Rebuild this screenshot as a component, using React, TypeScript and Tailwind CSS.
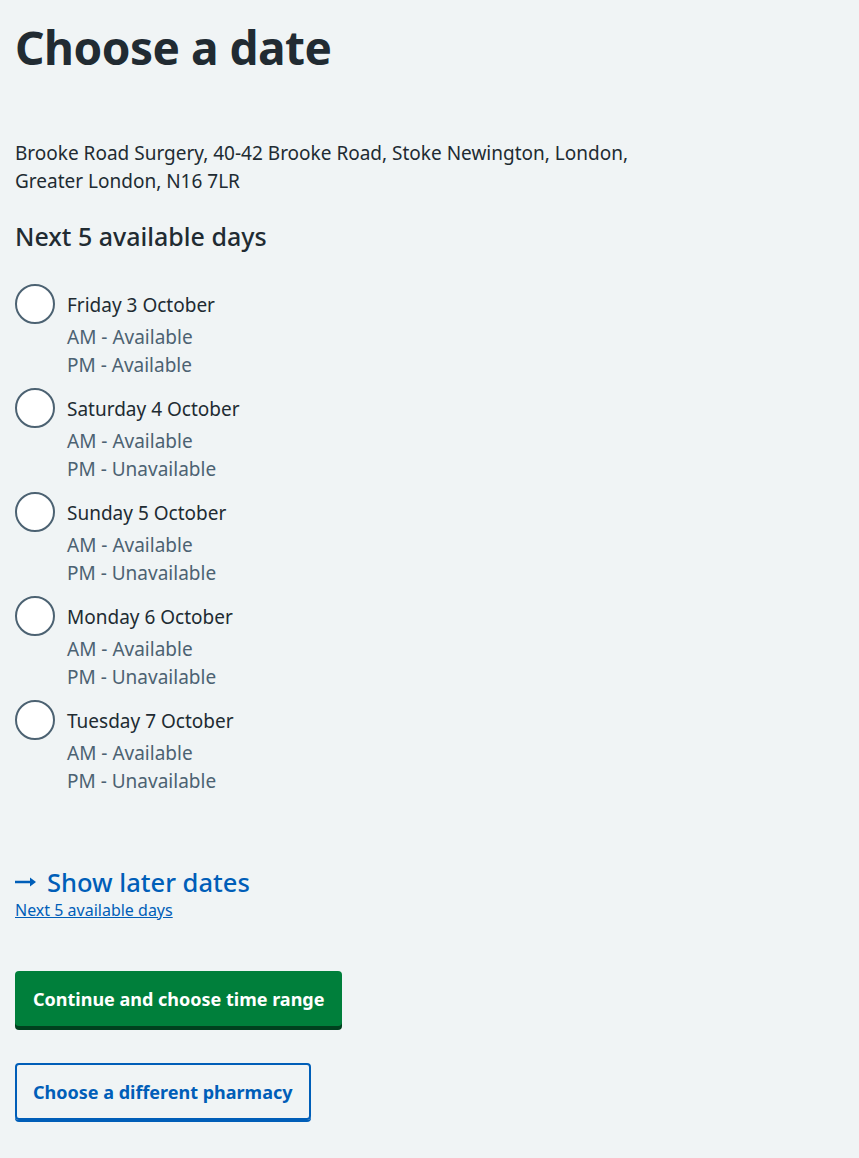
import React from 'react';

const days = [
  { label: 'Friday 3 October', am: 'Available', pm: 'Available' },
  { label: 'Saturday 4 October', am: 'Available', pm: 'Unavailable' },
  { label: 'Sunday 5 October', am: 'Available', pm: 'Unavailable' },
  { label: 'Monday 6 October', am: 'Available', pm: 'Unavailable' },
  { label: 'Tuesday 7 October', am: 'Available', pm: 'Unavailable' },
];

export default function App() {
  return (
    <div
      className="min-h-[1158px] bg-[#f0f4f5] text-[#212b32] px-[15px] pt-[19px]"
      style={{ fontFamily: '"Noto Sans", "Open Sans", Arial, sans-serif' }}
    >
      <h1 className="text-[46px] leading-[56px] font-bold tracking-[-0.5px] mb-[64px]">Choose a date</h1>

      <p className="text-[19px] leading-[28px] mb-[25px]">
        Brooke Road Surgery, 40-42 Brooke Road, Stoke Newington, London,
        <br />
        Greater London, N16 7LR
      </p>

      <h2 className="text-[25px] leading-[32px] font-medium mb-[32px]">Next 5 available days</h2>

      <div className="flex flex-col gap-[9px]">
        {days.map((d) => (
          <label key={d.label} className="flex gap-[12px] cursor-pointer">
            <span className="w-[40px] h-[40px] shrink-0 rounded-full border-2 border-[#4c6272] bg-white" />
            <div className="flex flex-col">
              <span className="text-[19px] leading-[28px] mt-[7px] text-[#212b32]">{d.label}</span>
              <span className="text-[19px] leading-[28px] mt-[4px] text-[#4c6272]">AM - {d.am}</span>
              <span className="text-[19px] leading-[28px] text-[#4c6272]">PM - {d.pm}</span>
            </div>
          </label>
        ))}
      </div>

      <div className="mt-[71px]">
        <a href="#" className="flex items-center gap-[10px] text-[#005eb8] text-[25.5px] leading-[32px] font-medium">
          <svg width="22" height="12" viewBox="0 0 22 12" fill="none">
            <path d="M0 6h17" stroke="#005eb8" strokeWidth="2.5" />
            <path d="M15 1.5L21 6l-6 4.5z" fill="#005eb8" />
          </svg>
          Show later dates
        </a>
        <a href="#" className="block text-[#005eb8] underline text-[16px] leading-[24px]">Next 5 available days</a>
      </div>

      <div className="mt-[49px] flex flex-col items-start gap-[37px]">
        <button className="bg-[#007f3b] text-white font-bold text-[18px] leading-[24px] px-[18px] h-[55px] rounded-[4px] shadow-[0_4px_0_#00401e]">
          Continue and choose time range
        </button>
        <button className="bg-transparent text-[#005eb8] font-bold text-[18px] leading-[24px] px-[16px] h-[57px] rounded-[4px] border-2 border-[#005eb8] shadow-[0_2px_0_#005eb8]">
          Choose a different pharmacy
        </button>
      </div>
    </div>
  );
}
